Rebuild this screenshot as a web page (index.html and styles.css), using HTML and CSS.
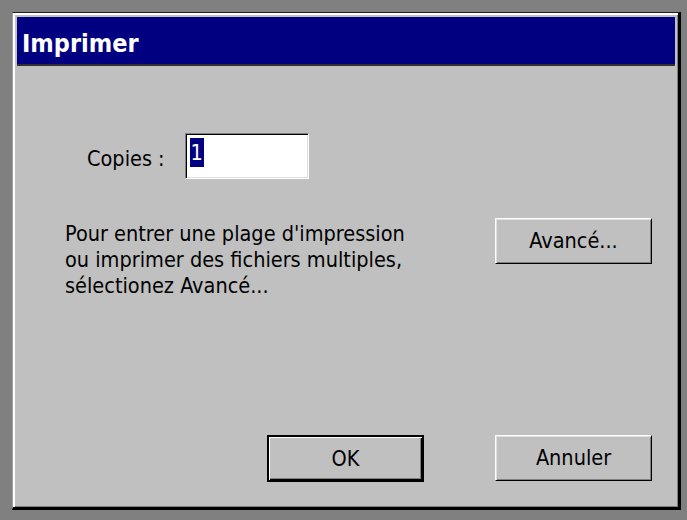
FILE: index.html
```html
<!DOCTYPE html>
<html lang="fr">

<head>
  <meta charset="UTF-8">
  <meta name="viewport" content="width=device-width, initial-scale=1.0">
  <title>Imprimer</title>
  <link rel="stylesheet" href="styles.css">
</head>

<body>
  <div class="dialog">
    <div class="titlebar">Imprimer</div>
    <div class="content">
      <div class="copies">
        <span class="label">Copies :</span>
        <div class="field"><span class="sel">1</span></div>
      </div>
      <div class="range">
        <p class="hint">Pour entrer une plage d'impression<br>ou imprimer des fichiers multiples,<br>sélectionez Avancé...</p>
        <button class="btn">Avancé...</button>
      </div>
      <div class="actions">
        <button class="btn default">OK</button>
        <button class="btn">Annuler</button>
      </div>
    </div>
  </div>
</body>

</html>
```

FILE: styles.css
```css
body {
  margin: 0;
  height: 520px;
  background: #808080;
  font-family: "DejaVu Sans Condensed", "DejaVu Sans", sans-serif;
  font-stretch: condensed;
  font-size: 21.5px;
  line-height: 26px;
  color: #000;
  overflow: hidden;
}

.dialog {
  margin: 12px 0 0 12px;
  width: 669px;
  height: 498px;
  box-sizing: border-box;
  display: flex;
  flex-direction: column;
  background: #c0c0c0;
  border-top: 1px solid #202020;
  border-left: 1px solid #a0a0a0;
  border-right: 3px solid #000;
  border-bottom: 3px solid #000;
  box-shadow: inset 2px 2px #fff, inset -1px -1px #808080;
  padding: 4px 3px 0 4px;
}

.titlebar {
  height: 44px;
  padding: 3px 0 0 5px;
  line-height: 47px;
  background: #000080;
  color: #fff;
  font-size: 25px;
  font-weight: bold;
  border-bottom: 2px solid #303030;
}

.content {
  flex: 1;
  display: flex;
  flex-direction: column;
  padding: 0 23px 25px 0;
}

.copies {
  display: flex;
  align-items: flex-end;
  gap: 20px;
  margin-top: 67px;
  padding-left: 70px;
}

.copies .label {
  margin-bottom: 7px;
}

.field {
  width: 124px;
  height: 46px;
  box-sizing: border-box;
  background: #fff;
  border-style: solid;
  border-width: 1px;
  border-color: #808080 #fff #fff #808080;
  box-shadow: inset 1px 1px #000, inset -1px -1px #dfdfdf;
  padding: 4px 0 0 4px;
}

.sel {
  display: inline-block;
  width: 14px;
  height: 29px;
  line-height: 29px;
  text-align: center;
  background: #000080;
  color: #fff;
}

.range {
  display: flex;
  justify-content: space-between;
  align-items: flex-start;
  margin-top: 39px;
  padding-left: 48px;
}

.hint {
  margin: 3px 0 0 0;
}

.btn {
  width: 157px;
  height: 46px;
  box-sizing: border-box;
  padding: 0;
  font: inherit;
  font-stretch: condensed;
  line-height: 26px;
  color: #000;
  background: #c0c0c0;
  border-style: solid;
  border-width: 1px;
  border-color: #fff #000 #000 #fff;
  box-shadow: inset 1px 1px #dfdfdf, inset -1px -1px #808080;
}

.btn.default {
  height: 47px;
  border: 2px solid #000;
  box-shadow: inset 1px 1px #fff, inset -1px -1px #000, inset -2px -2px #808080;
}

.actions {
  display: flex;
  justify-content: flex-end;
  gap: 71px;
  margin-top: auto;
}
```
